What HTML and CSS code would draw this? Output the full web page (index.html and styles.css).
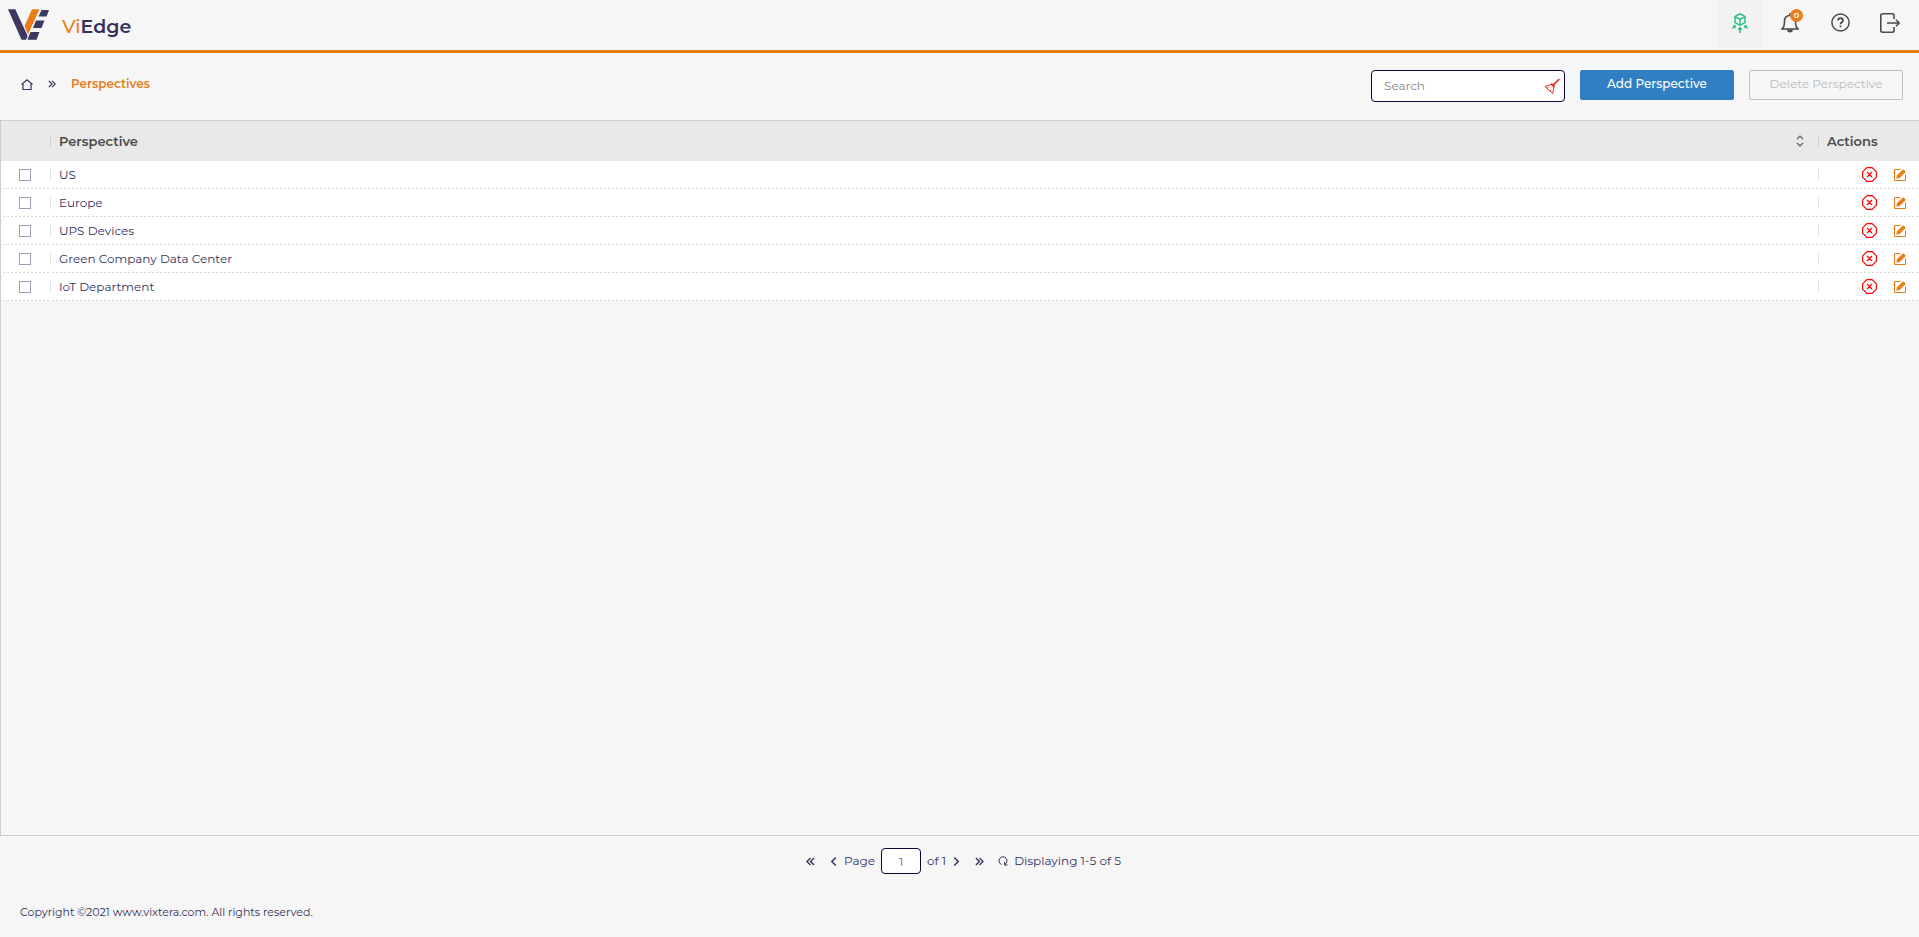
FILE: index.html
```html
<!DOCTYPE html>
<html lang="en">
<head>
  <meta charset="UTF-8">
  <meta name="viewport" content="width=device-width, initial-scale=1.0">
  <title>ViEdge</title>
  <link rel="stylesheet" href="styles.css">
</head>
<body>
  <!-- Shared icons -->
  <svg class="sprite" aria-hidden="true">
    <symbol id="icon-delete" viewBox="0 0 15 15">
      <path d="M4.9.6h5.2l4.3 4.3v5.2l-4.3 4.3H4.9L.6 10.1V4.9z M5 5l5 5M10 5l-5 5" fill="none" stroke="#f00" stroke-width="1.2"/>
    </symbol>
    <symbol id="icon-edit" viewBox="0 0 12 12">
      <path d="M6.5.5h-6v11h11v-6" fill="none" stroke="#e97d1c"/>
      <path d="M2.3 9.700l.7-3.400L8.600.7q.6-.5 1.200 0l1.500 1.500q.5.600 0 1.200L5.700 9z" fill="#e97d1c"/>
    </symbol>
    <symbol id="icon-double" viewBox="0 0 8 8">
      <path d="M.8.8L4 4 .8 7.2M4 .8L7.2 4 4 7.2" fill="none" stroke="currentColor" stroke-width="1.2"/>
    </symbol>
    <symbol id="icon-single" viewBox="0 0 8 8">
      <path d="M2 .5L5.5 4 2 7.5" fill="none" stroke="currentColor" stroke-width="1.3"/>
    </symbol>
  </svg>

  <header class="header">
    <a class="brand" href="#">
      <svg class="logo" viewBox="0 0 41 31" aria-hidden="true">
        <path d="M0 .3h7.300l11.700 25.200.5 2-1.500 3.200h-4.500z" fill="#3c3862"/>
        <path d="M24 .3h7.500L20 25.500 16.500 17z" fill="#e97d1c"/>
        <path d="M33.500 1H41l-2.500 6.500h-8zM28 11.500h8.500l-3 7.500H25zM22.500 23h9l-3 7.700h-9z" fill="#3c3862"/>
      </svg>
      <span class="brand-name"><span class="orange">Vi</span>Edge</span>
    </a>
    <nav class="tools">
      <button class="tool active" aria-label="Edge">
        <svg width="16" height="20" viewBox="0 0 16 20" fill="none" stroke="#1fc07a" stroke-width="1.4">
          <path d="M8 .8l5 2.700v6L8 12.300 3 9.500v-6zM3 3.700l5 2.700 5-2.700M8 6.400v5.500M8 20v-5M6.300 16.500L8 14.700l1.700 1.800M.5 15.500L3 13M1 12.900h2v2M15.500 15.500L13 13M15 12.900h-2v2"/>
        </svg>
      </button>
      <button class="tool" aria-label="Notifications">
        <svg width="18" height="20" viewBox="0 0 18 20" fill="none" stroke="#4a4a4a" stroke-width="1.6">
          <path d="M1 16c2-1.500 2.500-3 2.500-7.500C3.500 5 5.500 2.500 9 2.500S14.500 5 14.500 8.500c0 4.500.5 6 2.500 7.500z"/>
          <path d="M6 16.500h6c0 4-6 4-6 0z" fill="#4a4a4a" stroke="none"/>
          <path d="M9 0v3"/>
        </svg>
        <span class="badge">0</span>
      </button>
      <button class="tool" aria-label="Help">
        <svg width="19" height="19" viewBox="0 0 19 19" fill="none" stroke="#4a4a4a" stroke-width="1.5">
          <circle cx="9.500" cy="9.500" r="8.600"/>
          <path d="M7 7.600c0-3.300 5-3.300 5 0 0 1.700-2.500 1.700-2.500 3.700M9.500 12.500v1.700" stroke-width="1.7"/>
        </svg>
      </button>
      <button class="tool" aria-label="Log out">
        <svg width="20" height="20" viewBox="0 0 20 20" fill="none" stroke="#4a4a4a" stroke-width="1.6">
          <path d="M14 6V2.500Q14 .8 12.300.8H2.500Q.8.8.8 2.500v15q0 1.700 1.700 1.700h9.800q1.700 0 1.700-1.700V14M7 10h12M16 6.800l3.200 3.200-3.200 3.200"/>
        </svg>
      </button>
    </nav>
  </header>

  <div class="toolbar">
    <nav class="breadcrumb">
      <a href="#" aria-label="Home">
        <svg class="home" viewBox="0 0 12 11"><path d="M.5 5.500L6 .8l5.500 4.700M2 5v5.500h8V5" fill="none" stroke="currentColor" stroke-width="1.2"/></svg>
      </a>
      <svg class="arrow"><use href="#icon-double"/></svg>
      <a class="current" href="#">Perspectives</a>
    </nav>
    <div class="search">
      <input type="text" placeholder="Search" aria-label="Search">
      <button class="clear" aria-label="Clear search">
        <svg width="16" height="17" viewBox="0 0 16 17" fill="none" stroke="#e8281e">
          <path d="M15.300 1L9 7.300" stroke-width="1.7"/>
          <path d="M7 5.700l3.500 3" stroke-width="2"/>
          <path d="M8 6.300L1 8.500l7.700 7 1.300-7M3 10.300l1.500-.8M6 13l1-1"/>
        </svg>
      </button>
    </div>
    <button class="btn primary">Add Perspective</button>
    <button class="btn" disabled>Delete Perspective</button>
  </div>

  <main class="grid">
    <table>
      <thead>
        <tr>
          <th class="col-check"></th>
          <th>
            <div class="head">Perspective
              <svg class="sort" viewBox="0 0 8 12"><path d="M1 4l3-3 3 3M1 8l3 3 3-3" fill="none" stroke="#5a5a5a" stroke-width="1.1"/></svg>
            </div>
          </th>
          <th class="col-actions">Actions</th>
        </tr>
      </thead>
      <tbody>
        <tr>
          <td><input type="checkbox" aria-label="Select US"></td>
          <td>US</td>
          <td><div class="actions">
            <button aria-label="Delete US"><svg class="delete"><use href="#icon-delete"/></svg></button>
            <button aria-label="Edit US"><svg class="edit"><use href="#icon-edit"/></svg></button>
          </div></td>
        </tr>
        <tr>
          <td><input type="checkbox" aria-label="Select Europe"></td>
          <td>Europe</td>
          <td><div class="actions">
            <button aria-label="Delete Europe"><svg class="delete"><use href="#icon-delete"/></svg></button>
            <button aria-label="Edit Europe"><svg class="edit"><use href="#icon-edit"/></svg></button>
          </div></td>
        </tr>
        <tr>
          <td><input type="checkbox" aria-label="Select UPS Devices"></td>
          <td>UPS Devices</td>
          <td><div class="actions">
            <button aria-label="Delete UPS Devices"><svg class="delete"><use href="#icon-delete"/></svg></button>
            <button aria-label="Edit UPS Devices"><svg class="edit"><use href="#icon-edit"/></svg></button>
          </div></td>
        </tr>
        <tr>
          <td><input type="checkbox" aria-label="Select Green Company Data Center"></td>
          <td>Green Company Data Center</td>
          <td><div class="actions">
            <button aria-label="Delete Green Company Data Center"><svg class="delete"><use href="#icon-delete"/></svg></button>
            <button aria-label="Edit Green Company Data Center"><svg class="edit"><use href="#icon-edit"/></svg></button>
          </div></td>
        </tr>
        <tr>
          <td><input type="checkbox" aria-label="Select IoT Department"></td>
          <td>IoT Department</td>
          <td><div class="actions">
            <button aria-label="Delete IoT Department"><svg class="delete"><use href="#icon-delete"/></svg></button>
            <button aria-label="Edit IoT Department"><svg class="edit"><use href="#icon-edit"/></svg></button>
          </div></td>
        </tr>
      </tbody>
    </table>
  </main>

  <div class="pager">
    <button class="flip first" aria-label="First page"><svg class="arrow"><use href="#icon-double"/></svg></button>
    <button class="flip" aria-label="Previous page"><svg class="arrow"><use href="#icon-single"/></svg></button>
    <label for="page">Page</label>
    <input id="page" type="text" value="1">
    <span>of 1</span>
    <button aria-label="Next page"><svg class="arrow"><use href="#icon-single"/></svg></button>
    <button class="last" aria-label="Last page"><svg class="arrow"><use href="#icon-double"/></svg></button>
    <button aria-label="Refresh">
      <svg width="10" height="10" viewBox="0 0 10 10" fill="none" stroke="currentColor"><path d="M3.500 8.500A4 4 0 1 1 6.500 8.500M6.500 6v3h3"/></svg>
    </button>
    <span>Displaying 1-5 of 5</span>
  </div>

  <footer class="footer">Copyright ©2021 www.vixtera.com. All rights reserved.</footer>
</body>
</html>
```

FILE: styles.css
```css
* {
  box-sizing: border-box;
}

body {
  margin: 0;
  min-height: 100vh;
  display: flex;
  flex-direction: column;
  background: #f6f6f6;
  color: #35315c;
  font-family: Montserrat, Inter, sans-serif;
  font-size: 12px;
  line-height: 16px;
}

a {
  color: inherit;
  text-decoration: none;
}

button {
  padding: 0;
  border: 0;
  background: none;
  color: inherit;
  font: inherit;
  cursor: pointer;
}

svg {
  display: block;
}

.sprite {
  position: absolute;
  width: 0;
  height: 0;
}

/* Header */
.header {
  display: flex;
  justify-content: space-between;
  height: 53px;
  padding: 0 7px 0 8px;
  border-bottom: 3px solid #e97d1c;
}

.brand {
  display: flex;
  align-items: center;
  gap: 13px;
  padding-bottom: 1px;
}

.logo {
  width: 41px;
  height: 31px;
}

.brand-name {
  padding-top: 4px;
  font-size: 19px;
  line-height: 24px;
  font-weight: 600;
}

.orange {
  color: #e97d1c;
  font-weight: 500;
}

.tools {
  display: flex;
  gap: 6px;
}

.tool {
  position: relative;
  display: flex;
  align-items: center;
  justify-content: center;
  width: 44px;
  height: 48px;
  padding-bottom: 3px;
}

.tool.active {
  background: #f2f2f2;
}

.badge {
  position: absolute;
  top: 9px;
  left: 22px;
  width: 13px;
  height: 13px;
  border-radius: 50%;
  background: #e97d1c;
  color: #fff;
  font-size: 8px;
  line-height: 13px;
  font-weight: 600;
}

/* Toolbar */
.toolbar {
  display: flex;
  align-items: flex-start;
  gap: 15px;
  padding: 17px 16px 18px 21px;
}

.breadcrumb {
  display: flex;
  align-items: center;
  gap: 15px;
  height: 28px;
  margin-right: auto;
}

.home {
  width: 12px;
  height: 11px;
}

.arrow {
  width: 8px;
  height: 8px;
}

.current {
  color: #e97d1c;
  font-weight: 600;
}

.search {
  display: flex;
  align-items: center;
  width: 194px;
  height: 32px;
  padding: 0 4px 0 12px;
  border: 1px solid #0b0840;
  border-radius: 4px;
  background: #fff;
}

.search input {
  flex: 1;
  min-width: 0;
  padding: 0;
  border: 0;
  outline: 0;
  background: none;
  font: inherit;
}

.search input::placeholder {
  color: #858585;
}

.btn {
  width: 154px;
  height: 30px;
  padding-bottom: 2px;
  border: 1px solid #c0c0c0;
  border-radius: 2px;
}

.btn:disabled {
  color: #bbb;
  cursor: default;
}

.btn.primary {
  border-color: #317fc3;
  background: #317fc3;
  color: #fff;
  font-weight: 500;
}

/* Grid */
.grid {
  flex: 1;
  border: 1px solid #cdcdcd;
  border-right: 0;
}

table {
  width: 100%;
  border-spacing: 0;
  table-layout: fixed;
}

th,
td {
  height: 28px;
  padding: 0 0 0 9px;
  text-align: left;
}

th {
  height: 40px;
  color: #4a4a4a;
  font-size: 13px;
  font-weight: 600;
  background: linear-gradient(#d2d2d2, #d2d2d2) left center / 1px 12px no-repeat;
}

/* short divider on the left, fine dashes along the bottom */
td {
  padding-bottom: 1px;
  background:
    linear-gradient(#e2e2e5, #e2e2e5) left center / 1px 12px no-repeat,
    repeating-linear-gradient(90deg, transparent 0 2px, #d6d6de 2px 4px) left bottom / 100% 1px no-repeat;
}

th:first-child {
  background: none;
}

td:first-child {
  padding: 0 0 0 18px;
  background: repeating-linear-gradient(90deg, transparent 0 2px, #d6d6de 2px 4px) left bottom / 100% 1px no-repeat;
}

thead tr {
  background: #e9e9e9;
}

tbody tr {
  background: #fff;
}

.col-check {
  width: 49px;
}

.col-actions {
  width: 101px;
}

.head {
  display: flex;
  align-items: center;
  justify-content: space-between;
  padding-right: 14px;
}

.sort {
  width: 8px;
  height: 12px;
}

input[type="checkbox"] {
  appearance: none;
  display: block;
  width: 12px;
  height: 12px;
  margin: 0;
  border: 1px solid #a09db5;
  background: #fff;
}

.actions {
  display: flex;
  align-items: center;
  justify-content: flex-end;
  gap: 17px;
  padding-right: 13px;
}

.delete {
  width: 15px;
  height: 15px;
}

.edit {
  width: 12px;
  height: 12px;
}

/* Pager */
.pager {
  display: flex;
  align-items: center;
  justify-content: center;
  gap: 6px;
  height: 50px;
  padding-left: 8px;
}

.pager .arrow {
  width: 9px;
  height: 9px;
}

.pager .flip svg {
  transform: scaleX(-1);
}

.pager .first {
  padding-right: 8px;
}

.pager .last {
  padding: 0 8px;
}

.pager input {
  width: 40px;
  height: 26px;
  padding: 0;
  border: 1px solid #0b0840;
  border-radius: 4px;
  background: #fff;
  color: #6b6883;
  font: inherit;
  text-align: center;
}

.footer {
  padding: 18px 20px 17px;
  font-size: 11px;
}
```
